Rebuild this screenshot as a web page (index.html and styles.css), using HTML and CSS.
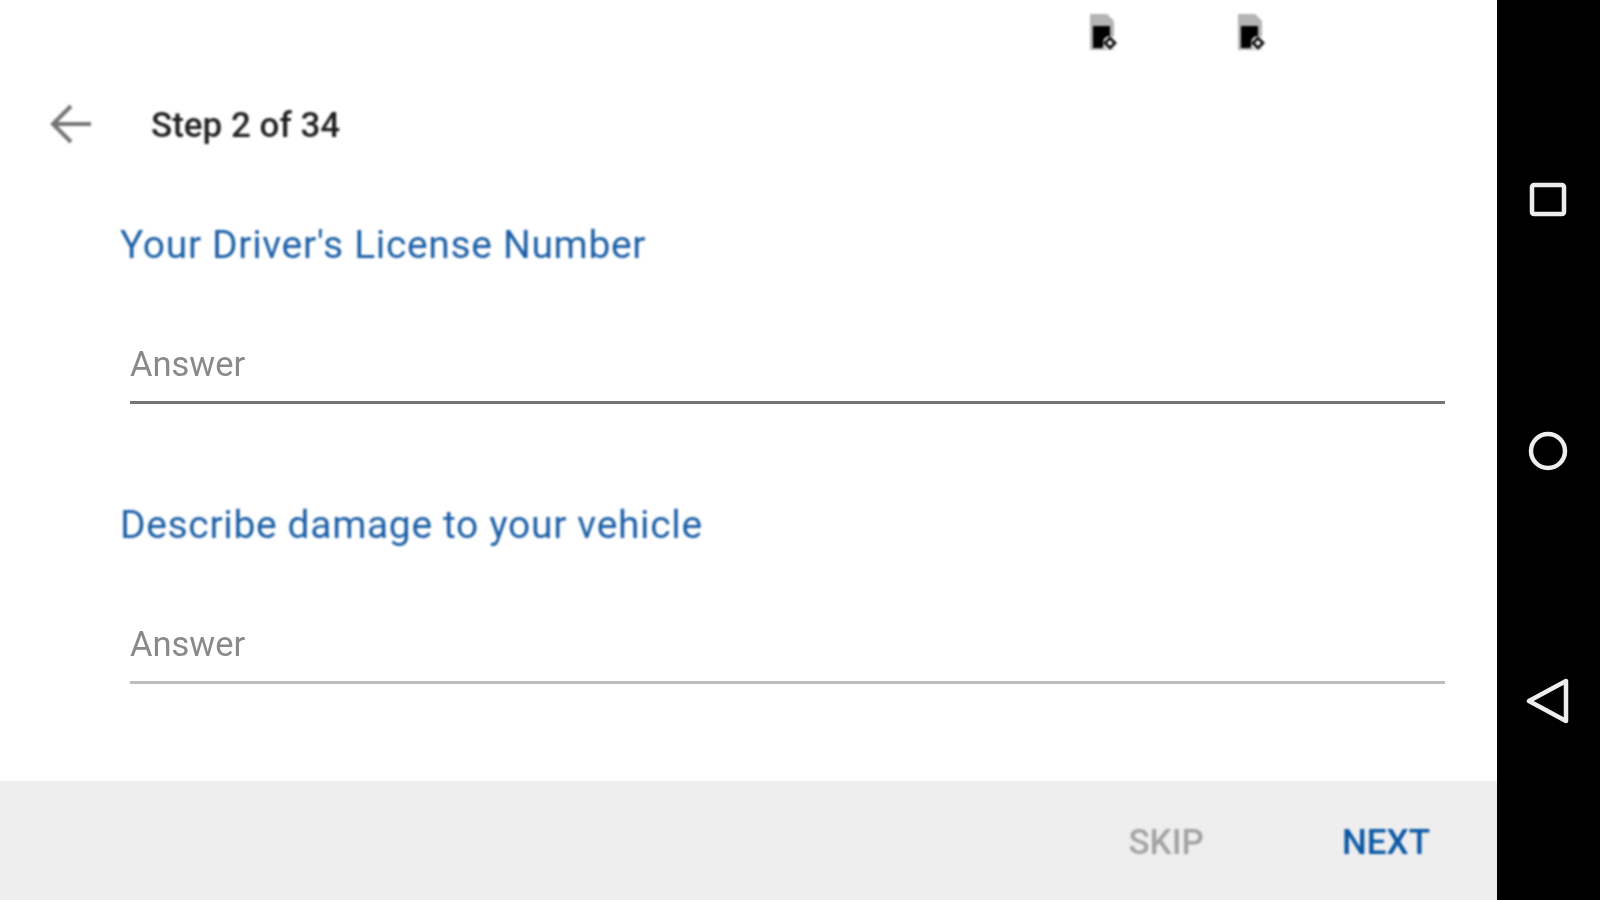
FILE: index.html
```html
<!DOCTYPE html>
<html>
<head>
  <meta charset="utf-8">
  <title>Step 2 of 34</title>
  <link rel="stylesheet" href="styles.css">
</head>
<body>
  <div class="screen">
    <div class="main">
      <div class="status-bar">
        <svg class="sim-icon" width="28" height="38" viewBox="0 0 28 38">
          <path d="M1 1H18L25 8V37H1Z" fill="#b4b4b4"/>
          <path d="M4 13H21V25L13 35H4Z" fill="#000"/>
          <circle cx="21" cy="30" r="7" fill="#fff"/>
          <path d="M16 30L21 25L26 30L21 35Z" fill="none" stroke="#111" stroke-width="3"/>
        </svg>
        <svg class="sim-icon" width="28" height="38" viewBox="0 0 28 38">
          <path d="M1 1H18L25 8V37H1Z" fill="#b4b4b4"/>
          <path d="M4 13H21V25L13 35H4Z" fill="#000"/>
          <circle cx="21" cy="30" r="7" fill="#fff"/>
          <path d="M16 30L21 25L26 30L21 35Z" fill="none" stroke="#111" stroke-width="3"/>
        </svg>
      </div>

      <div class="toolbar">
        <svg class="back-arrow" width="44" height="40" viewBox="0 0 44 40">
          <path d="M41 20H4M21 2L3 20L21 38" fill="none" stroke="#757575" stroke-width="4"/>
        </svg>
        <span class="step-title">Step 2 of 34</span>
      </div>

      <div class="questions">
        <div class="question">
          <div class="question-label">Your Driver's License Number</div>
          <div class="answer answer-focused">Answer</div>
        </div>
        <div class="question">
          <div class="question-label">Describe damage to your vehicle</div>
          <div class="answer">Answer</div>
        </div>
      </div>

      <div class="footer">
        <span class="btn-skip">SKIP</span>
        <span class="btn-next">NEXT</span>
      </div>
    </div>

    <div class="nav-bar">
      <svg width="40" height="40" viewBox="0 0 40 40">
        <rect x="4" y="4" width="32" height="29" rx="2" fill="none" stroke="#eee" stroke-width="4.5"/>
      </svg>
      <svg width="42" height="40" viewBox="0 0 42 40">
        <circle cx="21" cy="20" r="17" fill="none" stroke="#eee" stroke-width="4.5"/>
      </svg>
      <svg class="nav-back" width="44" height="46" viewBox="0 0 44 46">
        <path d="M3 23L40 3V43Z" fill="none" stroke="#eee" stroke-width="4.5" stroke-linejoin="round"/>
      </svg>
    </div>
  </div>
</body>
</html>
```

FILE: styles.css
```css
body {
  margin: 0;
  font-family: Roboto, "Liberation Sans", sans-serif;
  background: #000;
}

.screen {
  display: flex;
  width: 1600px;
  height: 900px;
  overflow: hidden;
}

.main {
  display: flex;
  flex-direction: column;
  width: 1497px;
  background: #fff;
}

.status-bar {
  display: flex;
  gap: 120px;
  height: 88px;
  padding: 13px 0 0 1089px;
  box-sizing: border-box;
}

.sim-icon {
  filter: blur(0.8px);
}

.toolbar {
  display: flex;
  align-items: center;
  height: 72px;
  padding-left: 50px;
}

.back-arrow {
  filter: blur(0.9px);
}

.step-title {
  margin: 2px 0 0 57px;
  font-size: 35px;
  font-weight: 500;
  color: #212121;
  filter: blur(0.9px);
}

.questions {
  flex: 1;
  display: flex;
  flex-direction: column;
  gap: 97px;
  padding: 61px 52px 0 120px;
}

.question-label {
  font-size: 39px;
  letter-spacing: 0.65px;
  line-height: 48px;
  color: #1c5fa6;
  filter: blur(0.9px);
}

.answer {
  margin: 75px 0 0 10px;
  padding-bottom: 17px;
  font-size: 34.5px;
  line-height: 40px;
  color: #8a8a8a;
  border-bottom: 3px solid #bdbdbd;
  filter: blur(0.7px);
}

.answer-focused {
  border-bottom-color: #757575;
}

.footer {
  display: flex;
  justify-content: flex-end;
  align-items: center;
  gap: 138px;
  height: 119px;
  padding: 4px 67px 0 0;
  box-sizing: border-box;
  background: #eeeeee;
  font-size: 35px;
  font-weight: 500;
}

.btn-skip {
  color: #a3a3a3;
  filter: blur(0.9px);
}

.btn-next {
  color: #0b57a4;
  filter: blur(0.9px);
}

.nav-bar {
  flex: 1;
  display: flex;
  flex-direction: column;
  align-items: center;
  background: #000;
  padding: 181px 2px 0 0;
  gap: 210px;
}

.nav-bar svg {
  filter: blur(0.7px);
}

.nav-back {
  margin-top: -3px;
}
```
